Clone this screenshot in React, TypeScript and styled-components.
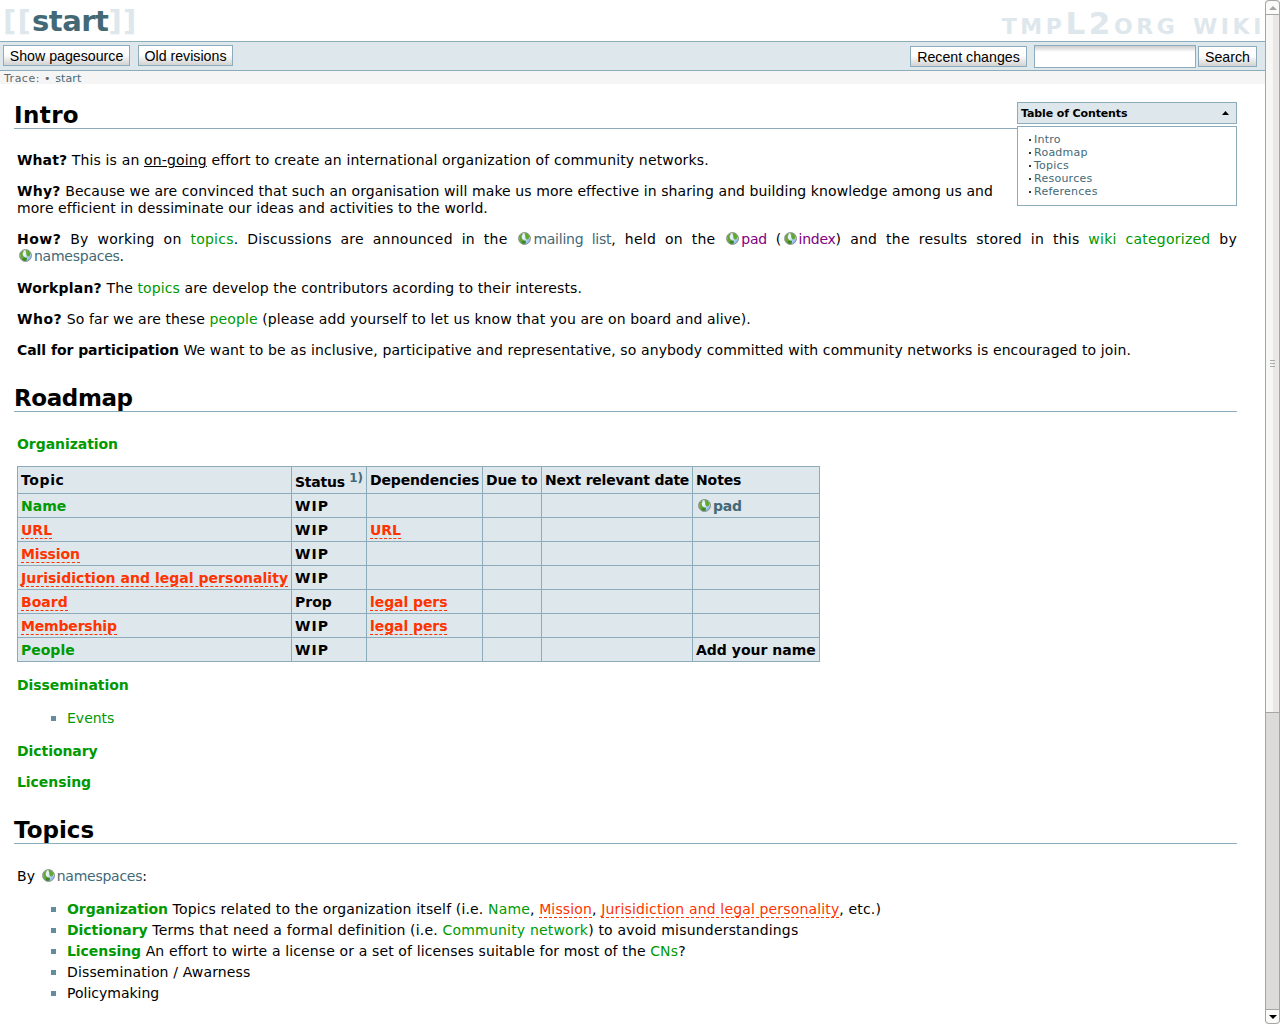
import React from "react";
import styled, { createGlobalStyle } from "styled-components";

const GlobalStyle = createGlobalStyle`
  * { box-sizing: border-box; }
  body { margin: 0; background: #fff; overflow: hidden; }
`;

const line = "#8cacbb";
const panel = "#dee7ec";
const sans = `Verdana, "DejaVu Sans", sans-serif`;

const Window = styled.div`
  display: flex;
  width: 1280px;
  height: 1024px;
  overflow: hidden;
  font: 14px/17px ${sans};
  color: #000;
  b { letter-spacing: -0.06px; }
`;
const Page = styled.div`
  flex: 1;
  min-width: 0;
  overflow: hidden;
`;
const Header = styled.header`
  display: flex;
  justify-content: space-between;
  height: 41px;
  padding-left: 3px;
  color: ${panel};
  font-weight: bold;
  white-space: nowrap;
`;
const PageName = styled.div`
  font-size: 29px;
  line-height: 42px;
  letter-spacing: 1.3px;
  a { color: #436976; letter-spacing: -0.5px; }
`;
const SiteName = styled.div`
  font-size: 31px;
  line-height: 47px;
  font-variant: small-caps;
  letter-spacing: 3.6px;
`;
const Toolbar = styled.div`
  display: flex;
  align-items: flex-start;
  height: 30px;
  padding: 3px 8px 0 3px;
  border: solid ${line};
  border-width: 1px 0;
  background: ${panel};
`;
const Button = styled.button<{ $w: number; $gap?: number; $drop?: boolean }>`
  flex: none;
  width: ${(p) => p.$w}px;
  height: 21px;
  margin: ${(p) => (p.$drop ? 1 : 0)}px ${(p) => p.$gap ?? 0}px 0 0;
  padding: 1px 0 0;
  border: 1px solid ${line};
  background: linear-gradient(#fff 45%, #d2d2d2);
  font: 14.2px/18px "Liberation Sans", Arial, sans-serif;
  white-space: nowrap;
  color: #000;
`;
const Spacer = styled.div`
  flex: 1;
`;
const SearchInput = styled.input`
  width: 162px;
  height: 23px;
  margin: 0 2px 0 0;
  border: 1px solid ${line};
  background: linear-gradient(#ccc, #fff 6px);
`;
const Trace = styled.div`
  height: 13px;
  padding-left: 4px;
  background: #f5f5f5;
  color: #666;
  font-size: 11px;
  line-height: 15px;
  letter-spacing: 0.5px;
  word-spacing: 0.2px;
  a { letter-spacing: 0.1px; }
`;
const Content = styled.main`
  padding: 18px 28px 0 14px;
`;
const Heading = styled.h1<{ $top: number; $ls?: number; $gap?: number }>`
  height: ${(p) => p.$top}px;
  margin: 0 0 ${(p) => p.$gap ?? 24}px;
  padding-top: ${(p) => p.$top - 27}px;
  border-bottom: 1px solid ${line};
  font-size: 23px;
  line-height: 27px;
  font-weight: bold;
  letter-spacing: ${(p) => p.$ls ?? 0}px;
`;
const Section = styled.section`
  margin-left: 3px;
`;
const P = styled.p<{ $gap?: number; $ls?: number }>`
  margin: 0 0 ${(p) => p.$gap ?? 14}px;
  text-align: justify;
  letter-spacing: ${(p) => p.$ls ?? 0.12}px;
`;
const Question = styled.strong<{ $ls?: number }>`
  font-weight: bold;
  letter-spacing: ${(p) => p.$ls ?? 0.2}px;
`;
const Toc = styled.aside`
  float: right;
  width: 220px;
  margin-left: 24px;
  font-size: 11px;
  line-height: 13px;
`;
const TocHead = styled.div`
  display: flex;
  justify-content: space-between;
  align-items: center;
  height: 22px;
  margin-bottom: 2px;
  padding: 0 7px 0 3px;
  border: 1px solid ${line};
  background: ${panel};
  font-weight: bold;
  letter-spacing: -0.12px;
`;
const TocBody = styled.ul`
  height: 80px;
  margin: 0;
  padding: 6px 0 0 11px;
  border: 1px solid ${line};
  background: #fff;
  list-style: none;
  color: #436976;
  letter-spacing: 0.25px;
  li { display: flex; align-items: center; gap: 3px; }
  li::before { content: ""; width: 2px; height: 2px; background: #333; }
`;
type Kind = "wiki" | "missing" | "plain" | "visited";
const colors: Record<Kind, string> = { wiki: "#009900", missing: "#ff3300", plain: "#436976", visited: "#800080" };
const Link = styled.a<{ $kind: Kind }>`
  color: ${(p) => colors[p.$kind]};
  border-bottom: ${(p) => (p.$kind === "missing" ? "1px dashed #ff3300" : "none")};
`;
const ExtLink = styled(Link)`
  letter-spacing: -0.25px;
  white-space: nowrap;
`;
const GlobeSvg = styled.svg`
  width: 13px;
  height: 13px;
  margin: 0 2px;
  vertical-align: -1px;
`;
const Globe = () => (
  <GlobeSvg viewBox="0 0 13 13">
    <defs>
      <linearGradient id="sea" x1="0" y1="0" x2="1" y2="1">
        <stop offset="0" stopColor="#dfeaf0" />
        <stop offset=".45" stopColor="#e8f3fd" />
        <stop offset="1" stopColor="#5f9ae6" />
      </linearGradient>
    </defs>
    <circle cx="6.5" cy="6.5" r="5.8" fill="url(#sea)" />
    <path d="M1.2 8.4 1.2 4 4 1.4 5 1.6 3.6 4.4 4.2 7 6.2 8.4 8 9 7.4 11.6 5 12 2.6 10.6Z" fill="#67a53a" />
    <path d="M4 9 7.8 8.8 7.6 11.4 5.6 12 3.4 10.8Z" fill="#3e8a22" />
    <path d="M6.2 1 9.6 1.6 11.6 4.4 10.6 7 8.8 7.8 7.2 5.6 7.2 3.4Z" fill="#5dab2e" />
    <circle cx="6.5" cy="6.5" r="6" fill="none" stroke="#656b65" strokeOpacity=".8" strokeWidth=".9" />
  </GlobeSvg>
);
const Ext = ({ children, kind = "plain" }: { children: React.ReactNode; kind?: Kind }) => (
  <ExtLink $kind={kind}><Globe />{children}</ExtLink>
);
const Table = styled.table`
  width: 803px;
  margin: 0 0 15px;
  table-layout: fixed;
  border-collapse: separate;
  border-spacing: 0;
  border: solid ${line};
  border-width: 1px 0 0 1px;
  background: ${panel};
  font-weight: bold;
  white-space: nowrap;
  sup { font-size: 12px; line-height: 0; vertical-align: 5px; color: #436976; }
`;
const Cell = styled.td<{ $head?: boolean; $ls?: number }>`
  height: ${(p) => (p.$head ? 27 : 24)}px;
  padding: ${(p) => (p.$head ? 0 : 2)}px 0 0 3px;
  border: solid ${line};
  border-width: 0 1px 1px 0;
  vertical-align: middle;
  letter-spacing: ${(p) => p.$ls ?? 0}px;
`;
const StatusHead = styled.div`
  padding-top: 4px;
`;
const List = styled.ul`
  margin: 0 0 14px 34px;
  padding: 0;
  list-style: none;
  line-height: 21px;
`;
const Item = styled.li<{ $ls?: number }>`
  display: flex;
  align-items: center;
  gap: 11px;
  white-space: nowrap;
  letter-spacing: ${(p) => p.$ls ?? 0}px;
  &::before { content: ""; width: 5px; height: 5px; background: #638c9c; }
`;
const Scroll = styled.div`
  display: flex;
  flex-direction: column;
  width: 15px;
  height: 1024px;
  background: #dcdbda;
  border: solid #a5a5a5;
  border-width: 0 1px;
  border-radius: 4px;
`;
const Arrow = styled.div<{ $down?: boolean }>`
  display: flex;
  align-items: center;
  justify-content: center;
  height: 15px;
  border: solid #a5a5a5;
  border-width: 1px 0;
  border-radius: ${(p) => (p.$down ? "0 0 4px 4px" : "4px 4px 0 0")};
  background: #fbfbfa;
`;
const Thumb = styled.div`
  display: flex;
  flex-direction: column;
  align-items: center;
  justify-content: center;
  gap: 2px;
  height: 698px;
  border-bottom: 1px solid #a5a5a5;
  background: linear-gradient(90deg, #f7f7f6 54%, #e9e8e7 54%);
  i { width: 5px; height: 1px; background: #aaa; }
`;
const Track = styled.div`
  flex: 1;
`;

const rows: [string, Kind, string, string, React.ReactNode, number][] = [
  ["Name", "wiki", "WIP", "", <Ext>pad</Ext>, 0],
  ["URL", "missing", "WIP", "URL", "", 0],
  ["Mission", "missing", "WIP", "", "", -0.15],
  ["Jurisidiction and legal personality", "missing", "WIP", "", "", 0.03],
  ["Board", "missing", "Prop", "legal pers", "", 0],
  ["Membership", "missing", "WIP", "legal pers", "", -0.18],
  ["People", "wiki", "WIP", "", "Add your name", 0],
];

export default function App() {
  return (
    <Window>
      <GlobalStyle />
      <Page>
        <Header>
          <PageName>[[<a>start</a>]]</PageName>
          <SiteName>tmpL2org wiki</SiteName>
        </Header>
        <Toolbar>
          <Button $w={127} $gap={8}>Show pagesource</Button>
          <Button $w={95}>Old revisions</Button>
          <Spacer />
          <Button $w={117} $gap={7} $drop>Recent changes</Button>
          <SearchInput />
          <Button $w={59} $drop>Search</Button>
        </Toolbar>
        <Trace>Trace: • <Link $kind="plain">start</Link></Trace>
        <Content>
          <Toc>
            <TocHead>
              Table of Contents
              <svg width="7" height="4" viewBox="0 0 7 4"><path d="M3.5 0 7 4H0Z" /></svg>
            </TocHead>
            <TocBody>
              <li>Intro</li><li>Roadmap</li><li>Topics</li><li>Resources</li><li>References</li>
            </TocBody>
          </Toc>
          <Heading $top={27} $ls={0.4} $gap={23}>Intro</Heading>
          <Section>
            <P $ls={0.15}><Question $ls={0.1}>What?</Question> This is an <u>on-going</u> effort to create an international organization of community networks.</P>
            <P $ls={0.08}><Question $ls={0.25}>Why?</Question> Because we are convinced that such an organisation will make us more effective in sharing and building knowledge among us and more efficient in dessiminate our ideas and activities to the world.</P>
            <P $gap={15} $ls={0.24}><Question $ls={0.5}>How?</Question> By working on <Link $kind="wiki">topics</Link>. Discussions are announced in the <Ext>mailing list</Ext>, held on the <Ext kind="visited">pad</Ext> (<Ext kind="visited">index</Ext>) and the results stored in this <Link $kind="wiki">wiki categorized</Link> by <Ext>namespaces</Ext>.</P>
            <P><Question>Workplan?</Question> The <Link $kind="wiki">topics</Link> are develop the contributors acording to their interests.</P>
            <P $ls={0.11}><Question $ls={0.5}>Who?</Question> So far we are these <Link $kind="wiki">people</Link> (please add yourself to let us know that you are on board and alive).</P>
            <P $ls={0.11}><b>Call for participation</b> We want to be as inclusive, participative and representative, so anybody committed with community networks is encouraged to join.</P>
          </Section>
          <Heading $top={39} $ls={-0.4}>Roadmap</Heading>
          <Section>
            <P $gap={13}><Link $kind="wiki"><b>Organization</b></Link></P>
            <Table>
              <colgroup>
                {[274, 75, 116, 59, 151, 127].map((w) => <col key={w} style={{ width: w }} />)}
              </colgroup>
              <tbody>
                <tr>
                  <Cell $head $ls={0.6}>Topic</Cell>
                  <Cell $head $ls={-0.25}><StatusHead>Status <sup>1)</sup></StatusHead></Cell>
                  <Cell $head $ls={-0.15}>Dependencies</Cell>
                  <Cell $head $ls={-0.15}>Due to</Cell>
                  <Cell $head $ls={-0.23}>Next relevant date</Cell>
                  <Cell $head $ls={-0.1}>Notes</Cell>
                </tr>
                {rows.map(([topic, kind, status, dep, note, ls]) => (
                  <tr key={topic}>
                    <Cell $ls={ls}><Link $kind={kind}>{topic}</Link></Cell>
                    <Cell $ls={status === "WIP" ? 1 : 0}>{status}</Cell>
                    <Cell $ls={-0.08}>{dep && <Link $kind="missing">{dep}</Link>}</Cell>
                    <Cell /><Cell />
                    <Cell>{note}</Cell>
                  </tr>
                ))}
              </tbody>
            </Table>
            <P><Link $kind="wiki"><b>Dissemination</b></Link></P>
            <List><Item><Link $kind="wiki">Events</Link></Item></List>
            <P><Link $kind="wiki"><b>Dictionary</b></Link></P>
            <P><Link $kind="wiki"><b>Licensing</b></Link></P>
          </Section>
          <Heading $top={39}>Topics</Heading>
          <Section>
            <P>By <Ext>namespaces</Ext>:</P>
            <List>
              <Item $ls={0.15}><span><Link $kind="wiki"><b>Organization</b></Link> Topics related to the organization itself (i.e. <Link $kind="wiki">Name</Link>, <Link $kind="missing">Mission</Link>, <Link $kind="missing">Jurisidiction and legal personality</Link>, etc.)</span></Item>
              <Item $ls={0.19}><span><Link $kind="wiki"><b>Dictionary</b></Link> Terms that need a formal definition (i.e. <Link $kind="wiki">Community network</Link>) to avoid misunderstandings</span></Item>
              <Item $ls={0.13}><span><Link $kind="wiki"><b>Licensing</b></Link> An effort to wirte a license or a set of licenses suitable for most of the <Link $kind="wiki">CNs</Link>?</span></Item>
              <Item $ls={0.15}>Dissemination / Awarness</Item>
              <Item>Policymaking</Item>
            </List>
          </Section>
        </Content>
      </Page>
      <Scroll>
        <Arrow><svg width="8" height="4" viewBox="0 0 8 4"><path d="M4 0 8 4H0Z" fill="#a8a6a3" /></svg></Arrow>
        <Thumb><i /><i /><i /></Thumb>
        <Track />
        <Arrow $down><svg width="8" height="4" viewBox="0 0 8 4"><path d="M4 4 8 0H0Z" /></svg></Arrow>
      </Scroll>
    </Window>
  );
}
